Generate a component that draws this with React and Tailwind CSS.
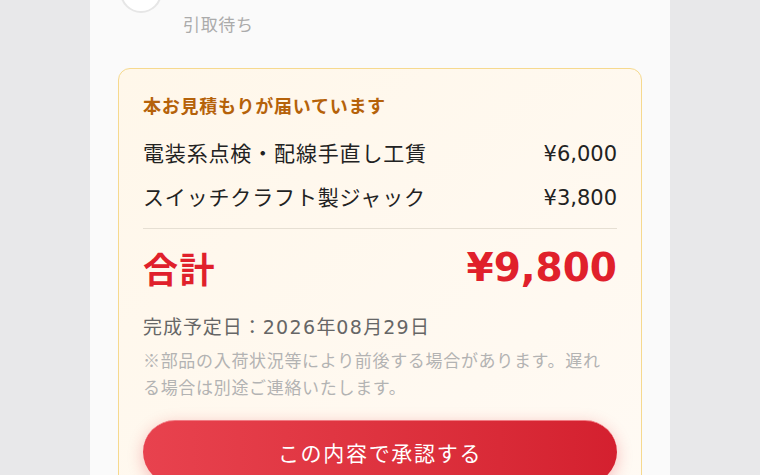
import React from 'react';

const items = [
  { name: '電装系点検・配線手直し工賃', price: '¥6,000' },
  { name: 'スイッチクラフト製ジャック', price: '¥3,800' },
];

// 数字だけ幅の広い欧文フォントで組む
const Num = ({ children, className = '' }) => (
  <span className={className} style={{ fontFamily: '"DejaVu Sans", sans-serif' }}>
    {children}
  </span>
);

const App = () => {
  return (
    <div
      className="w-[760px] h-[475px] overflow-hidden bg-[#e8e8ea] flex justify-center"
      style={{ fontFamily: '"Noto Sans CJK JP", "Noto Sans", sans-serif' }}
    >
      <div className="w-[580px] h-full bg-[#fafafa] overflow-hidden">
        {/* 進捗ステップ（上部は切れている） */}
        <div className="-mt-[30px] px-[30px] flex gap-[21px]">
          <div className="mt-[1px] w-[42px] h-[42px] rounded-full border-2 border-[#e6e6e6] bg-white shrink-0" />
          <div className="flex flex-col">
            <span className="h-[16px]" />
            <span className="mt-[26px] text-[17px] leading-[24px] text-[#ababab] tracking-[0.04em]">引取待ち</span>
          </div>
        </div>

        {/* 見積もりカード */}
        <div className="mx-[28px] mt-[32px] rounded-[12px] border-[1.5px] border-[#f6d98e] bg-gradient-to-br from-[#fff7ea] to-[#fffaf4] px-6 pt-[23px] pb-6">
          <p className="text-[18px] leading-[26px] font-bold text-[#b5620a] tracking-[0.04em]">
            本お見積もりが届いています
          </p>

          <div className="mt-[13px]">
            {items.map((item) => (
              <div key={item.name} className="h-[44px] flex items-center justify-between text-[21px] text-[#222] tracking-[0.04em]">
                <span>{item.name}</span>
                <Num className="pt-[3px] tracking-normal">{item.price}</Num>
              </div>
            ))}
          </div>

          <div className="mt-[9px] h-px bg-[#e6dfd3]" />

          <div className="mt-[17px] h-[44px] flex items-center justify-between text-[#e0202b] font-bold">
            <span className="text-[35px] tracking-[0.04em]">合計</span>
            <Num className="text-[39px]">¥9,800</Num>
          </div>

          <p className="mt-[23px] text-[19px] leading-[26px] text-[#666] tracking-[0.05em]">
            完成予定日：<Num className="tracking-[0.07em]">2026</Num>年<Num className="tracking-[0.07em]">08</Num>月<Num className="tracking-[0.07em]">29</Num>日
          </p>
          <p className="mt-[6px] text-[17px] leading-[27px] text-[#b3b3b3] tracking-[0.04em]">
            ※部品の入荷状況等により前後する場合があります。遅れる場合は別途ご連絡いたします。
          </p>

          <button
            type="button"
            className="mt-[20px] w-full h-[64px] rounded-full bg-gradient-to-r from-[#e8424e] to-[#d4202f] border-t border-[#f07a82] text-white text-[21px] tracking-[0.08em] shadow-[0_4px_16px_rgba(224,32,43,0.28)]"
          >
            この内容で承認する
          </button>
        </div>
      </div>
    </div>
  );
};

export default App;
